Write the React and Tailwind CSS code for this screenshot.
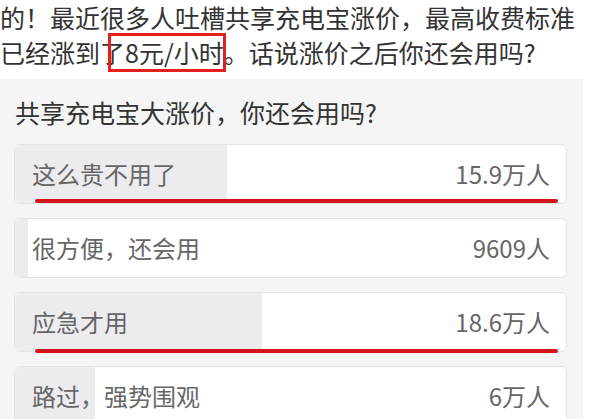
const options = [
  { label: '这么贵不用了', count: '15.9万人', pct: 38.4, mark: 'bottom-[0px]' },
  { label: '很方便，还会用', count: '9609人', pct: 2.3 },
  { label: '应急才用', count: '18.6万人', pct: 44.9, mark: '-bottom-[2px]' },
  { label: '路过，强势围观', count: '6万人', pct: 14.5 },
];

const PollOption = ({ label, count, pct, mark }) => (
  <div className="relative h-[60px] rounded-[6px] border border-[#e4e4e6] bg-white">
    <div className="absolute inset-0 overflow-hidden rounded-[6px]">
      <div className="h-full bg-[#ececee]" style={{ width: `${pct}%` }} />
    </div>
    <div className="relative flex h-full items-center justify-between pl-[17px] pr-[16px] text-[24px] text-[#666]">
      <span>{label}</span>
      <span>{count}</span>
    </div>
    {/* 手画红线 */}
    {mark && (
      <div className={`absolute left-[20px] right-[8px] h-[4px] rounded-full bg-[#d2151b] ${mark}`} />
    )}
  </div>
);

export default function App() {
  return (
    <div className="h-[419px] w-[600px] overflow-hidden bg-white font-['Noto_Sans_CJK_SC','Noto_Sans',sans-serif]">
      {/* 正文 */}
      <div className="h-[79px] text-[25px] leading-[35px] text-[#333]">
        <p className="whitespace-nowrap">的！最近很多人吐槽共享充电宝涨价，最高收费标准</p>
        <p className="whitespace-nowrap">
          已经涨到了
          <span className="relative">
            8元/小时
            <span className="absolute -left-[17px] -right-[2px] -top-[1px] -bottom-[2px] border-[3px] border-[#e3201e]" />
          </span>
          。话说涨价之后你还会用吗?
        </p>
      </div>

      {/* 投票 */}
      <div className="w-[583px] bg-[#f5f5f5] pl-[14px] pr-[16px] pt-[16px] pb-[20px]">
        <p className="pl-px text-[25px] leading-[35px] text-[#333]">共享充电宝大涨价，你还会用吗?</p>
        <div className="mt-[14px] flex flex-col gap-[14px]">
          {options.map((o) => (
            <PollOption key={o.label} {...o} />
          ))}
        </div>
      </div>
    </div>
  );
}
